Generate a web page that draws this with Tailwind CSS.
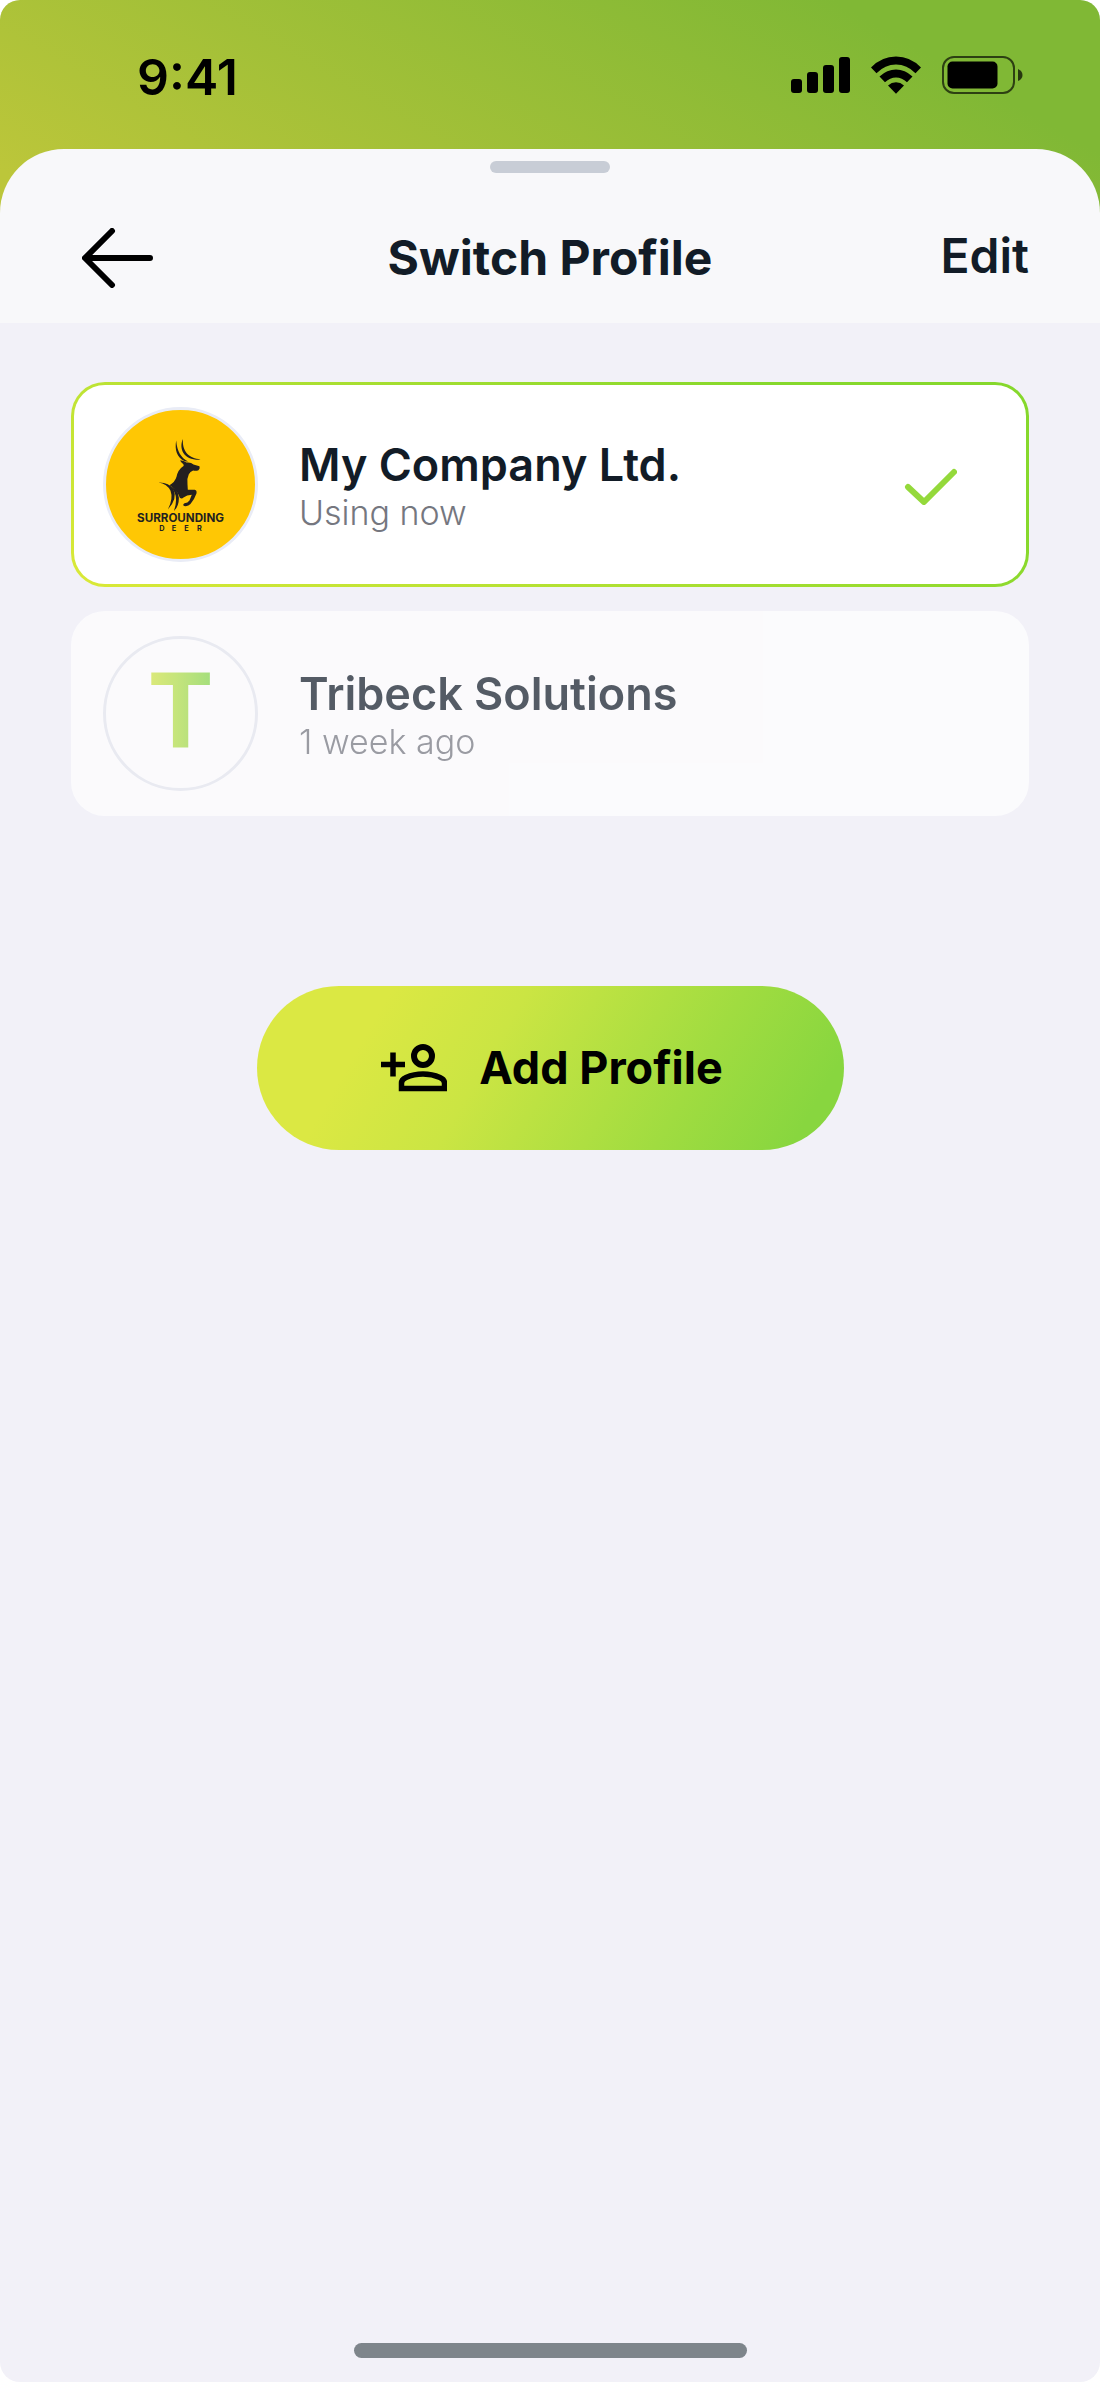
<!DOCTYPE html>
<html lang="en">
<head>
  <meta charset="UTF-8">
  <meta name="viewport" content="width=device-width, initial-scale=1.0">
  <title>Switch Profile</title>
  <script src="https://cdn.jsdelivr.net/npm/@tailwindcss/browser@4"></script>
</head>
<body class="bg-white font-[Inter,sans-serif] text-[#121c27]">
  <div class="min-h-screen flex flex-col overflow-hidden rounded-[20px] bg-[#f2f1f8]">
    <div class="bg-[linear-gradient(30deg,#bcc63a_16%,#80b835_84%)]">
      <!-- Status bar -->
      <div class="flex h-[149px] items-center justify-between pt-1 pl-[137px] pr-[77px] text-black">
        <time class="text-[50px] leading-[56px] font-semibold">9:41</time>
        <div class="flex items-center gap-5 pb-1">
          <svg class="h-9 w-[60px]" viewBox="0 0 60 36" aria-hidden="true">
            <rect x="0" y="22" width="11" height="14" rx="3"/>
            <rect x="16" y="15" width="11" height="21" rx="3"/>
            <rect x="32" y="8" width="11" height="28" rx="3"/>
            <rect x="48" y="0" width="11" height="36" rx="3"/>
          </svg>
          <svg class="h-[38px] w-[50px]" viewBox="0 0 50 38" aria-hidden="true">
            <path d="M0 11.500Q10.500 .5 25 .5T50 11.500L44.500 17.200Q36 8.500 25 8.500T5.500 17.200Z"/>
            <path d="M8.500 20.500Q16 13.500 25 13.500T41.500 20.500L36 26.200Q31 21.500 25 21.500T14 26.200Z"/>
            <path d="M17 29.500Q20.500 26.300 25 26.300T33 29.500L25 37.700Z"/>
          </svg>
          <svg class="h-[38px] w-[82px]" viewBox="0 0 82 38" aria-hidden="true">
            <rect x="2" y="1" width="71" height="36" rx="11" fill="none" stroke="#000" stroke-opacity=".65" stroke-width="2"/>
            <rect x="6.500" y="5.500" width="50" height="27" rx="5"/>
            <path d="M77 13Q81.500 15 81.500 19T77 25Z" fill-opacity=".7"/>
          </svg>
        </div>
      </div>

      <!-- Sheet header -->
      <header class="rounded-t-[64px] bg-[#f8f8fa] pt-3">
        <div class="mx-auto h-3 w-[120px] rounded-full bg-[#c8cdd6]"></div>
        <div class="grid h-[150px] grid-cols-[1fr_auto_1fr] items-center px-[71px] pt-5">
          <button type="button" aria-label="Back" class="justify-self-start pl-[11px]">
            <svg class="h-[60px] w-[72px]" viewBox="0 0 72 60" fill="none" stroke="#000" stroke-width="6" stroke-linecap="round" stroke-linejoin="round" aria-hidden="true">
              <path d="M30 3L3 30L30 57M4 30H68"/>
            </svg>
          </button>
          <h1 class="text-[48px] leading-[56px] font-bold">Switch Profile</h1>
          <button type="button" class="justify-self-end pb-1 text-[48px] leading-[56px] font-semibold">Edit</button>
        </div>
      </header>
    </div>

    <main class="flex flex-col px-[71px] pt-[59px]">
      <ul class="flex flex-col gap-6">
        <li class="rounded-[34px] bg-[linear-gradient(30deg,#dbe938_0%,#86d82c_80%)] p-[3px]">
          <button type="button" aria-current="true" class="flex h-[199px] w-full items-center rounded-[31px] bg-white pl-[29px] pr-[69px] text-left">
            <span class="size-[155px] shrink-0 overflow-hidden rounded-full border-3 border-[#e9ecf6] bg-[#ffc704]">
              <svg class="size-full" viewBox="137 122 448 448" fill="#231f20" role="img" aria-label="Surrounding Deer">
                <path d="M348 214C343 242 350 266 374 276L384 277C362 266 351 247 348 214Z"/>
                <path d="M368 209C355 240 371 276 427 271C394 268 366 255 368 209Z"/>
                <path d="M360 273Q371 274 379 280Q392 278 400 286L418 291Q421 297 415 303Q408 306 399 304Q390 307 386 315Q380 327 382 345L383 362Q395 362 404 362Q411 364 409 373Q404 388 391 405Q384 413 372 411Q366 406 373 402Q383 402 388 394L395 377Q380 377 370 385Q365 390 359 386Q352 366 337 354L328 348Q344 340 349 323Q353 301 370 290Q372 287 369 284Q362 281 360 273Z"/>
                <path d="M295 340Q326 339 340 361Q353 389 323 421Q340 389 331 365Q321 344 295 340Z"/>
                <path d="M325 348Q355 358 356 385Q357 410 341 426Q351 397 346 378Q341 359 325 348Z"/>
                <text x="361" y="460" text-anchor="middle" font-size="35" font-weight="700">SURROUNDING</text>
                <text x="297 335 372 411" y="485" font-size="22" font-weight="700">DEER</text>
              </svg>
            </span>
            <span class="ml-[41px] grow pt-1">
              <span class="block text-[45px] leading-[52px] font-semibold">My Company Ltd.</span>
              <span class="block text-[34px] leading-[44px] font-light text-[#75777f]">Using now</span>
            </span>
            <svg class="h-10 w-[54px]" viewBox="0 0 54 40" fill="none" stroke="#94d93b" stroke-width="6" stroke-linecap="round" stroke-linejoin="round" aria-hidden="true">
              <path d="M5 22L21 37L51 7"/>
            </svg>
          </button>
        </li>
        <li class="opacity-70">
          <button type="button" class="flex h-[205px] w-full items-center rounded-[34px] bg-white px-8 text-left">
            <span class="flex size-[155px] shrink-0 items-center justify-center rounded-full border-3 border-[#e6e8ef] pb-3">
              <span class="bg-linear-to-r from-[#d2e644] to-[#84d74a] bg-clip-text font-[Lato,sans-serif] text-[102px] leading-[120px] font-black text-transparent">T</span>
            </span>
            <span class="ml-[41px] grow pt-1">
              <span class="block text-[45px] leading-[52px] font-semibold">Tribeck Solutions</span>
              <span class="block text-[34px] leading-[44px] font-light text-[#75777f]">1 week ago</span>
            </span>
          </button>
        </li>
      </ul>

      <button type="button" class="mt-[170px] flex h-[164px] w-[587px] max-w-full items-center justify-center gap-8 self-center rounded-full bg-[linear-gradient(120deg,#dbe843_20%,#cbe543_40%,#a0dc40_72%,#88d63f_92%)] pl-1 text-[45px] leading-[52px] font-bold text-black">
        <svg class="h-12 w-[66px]" viewBox="0 0 66 48" fill="none" stroke="#000" aria-hidden="true">
          <path d="M0 20.500H24M12 8.500V32.500" stroke-width="5.500"/>
          <circle cx="42" cy="12" r="9" stroke-width="6"/>
          <path d="M20.500 44.500V39Q20.500 35.500 25 33.500Q33 30 42 30T59 33.500Q63.500 35.500 63.500 39V44.500Z" stroke-width="5.500"/>
        </svg>
        Add Profile
      </button>
    </main>

    <div class="mx-auto mt-auto mb-6 h-[15px] w-[393px] shrink-0 rounded-full bg-[#7e858b]"></div>
  </div>
</body>
</html>
